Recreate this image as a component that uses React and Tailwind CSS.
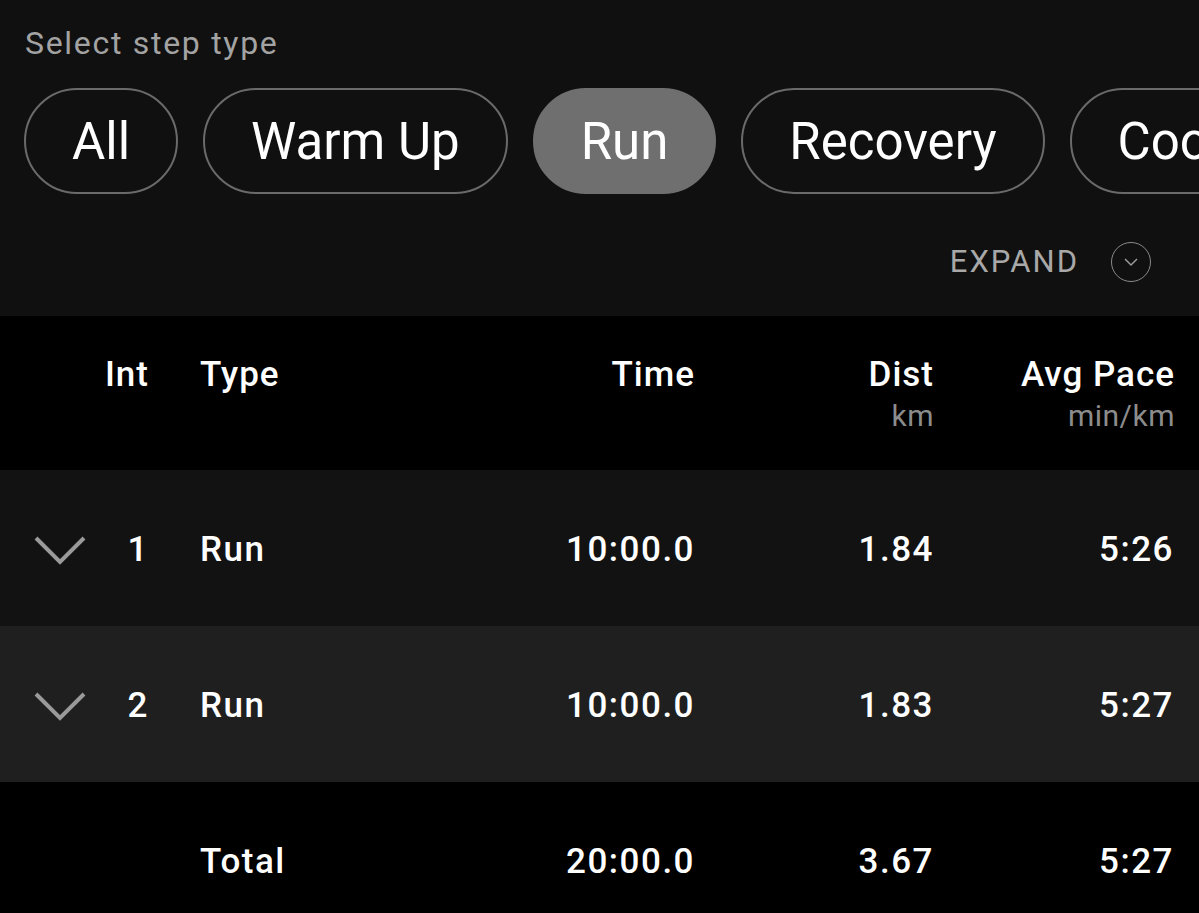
import { useState } from 'react';

const STEPS = ['All', 'Warm Up', 'Run', 'Recovery', 'Cool Down'];

const ROWS = [
  { int: '1', type: 'Run', time: '10:00.0', dist: '1.84', pace: '5:26', bg: 'bg-[#121212]' },
  { int: '2', type: 'Run', time: '10:00.0', dist: '1.83', pace: '5:27', bg: 'bg-[#1f1f1f]' },
];

function Chevron() {
  return (
    <svg width="52" height="30" viewBox="0 0 52 30" className="block">
      <polyline points="2,3 26,27 50,3" fill="none" stroke="#9a9a9a" strokeWidth="4" />
    </svg>
  );
}

function StepPill({ label, active, onClick }) {
  return (
    <button
      onClick={onClick}
      className={`shrink-0 h-[106px] px-[46px] rounded-full text-[51px] leading-none text-white ${
        active ? 'bg-[#6f6f6f] border-2 border-[#6f6f6f]' : 'border-2 border-[#6a6a6a]'
      }`}
    >
      {label}
    </button>
  );
}

function Row({ chevron, int, type, time, dist, pace, className }) {
  return (
    <div className={`flex items-center h-[156px] pt-[4px] text-[35px] font-medium tracking-[1.5px] text-white ${className}`}>
      <div className="w-[100px] pl-[34px]">{chevron && <Chevron />}</div>
      <div className="w-[49px] text-right">{int}</div>
      <div className="w-[200px] pl-[51px]">{type}</div>
      <div className="w-[346px] text-right">{time}</div>
      <div className="w-[239px] text-right">{dist}</div>
      <div className="w-[240px] text-right">{pace}</div>
    </div>
  );
}

export default function App() {
  const [step, setStep] = useState('Run');
  return (
    <div className="w-[1199px] h-[913px] overflow-hidden bg-black font-['Roboto',sans-serif]">
      <div className="h-[316px] bg-[#101010] pt-[24px]">
        <div className="pl-[25px] text-[32px] leading-[38px] text-[#a3a3a3] tracking-[1.7px]">Select step type</div>
        <div className="flex gap-[25px] pl-[24px] mt-[26px] overflow-hidden">
          {STEPS.map((s) => (
            <StepPill key={s} label={s} active={s === step} onClick={() => setStep(s)} />
          ))}
        </div>
        <div className="flex items-center justify-end pr-[48px] mt-[45px] gap-[32px]">
          <span className="text-[31px] tracking-[2px] text-[#a8a8a8]">EXPAND</span>
          <span className="w-[40px] h-[40px] rounded-full border-[1.5px] border-[#8a8a8a] flex items-center justify-center">
            <svg width="16" height="10" viewBox="0 0 16 10">
              <polyline points="2,2 8,8 14,2" fill="none" stroke="#9a9a9a" strokeWidth="1.5" />
            </svg>
          </span>
        </div>
      </div>

      <div className="flex items-start h-[154px] pt-[39px] bg-black text-[35px] leading-[40px] tracking-[1px] text-white font-medium">
        <div className="w-[100px]" />
        <div className="w-[49px] text-right">Int</div>
        <div className="w-[200px] pl-[51px]">Type</div>
        <div className="w-[346px] text-right">Time</div>
        <div className="w-[239px] text-right">
          Dist
          <div className="text-[30px] font-normal text-[#8c8c8c] leading-[42px] tracking-[0.5px]">km</div>
        </div>
        <div className="w-[241px] text-right">
          Avg Pace
          <div className="text-[30px] font-normal text-[#8c8c8c] leading-[42px] tracking-[0.5px]">min/km</div>
        </div>
      </div>

      {ROWS.map((r) => (
        <Row key={r.int} chevron {...r} className={r.bg} />
      ))}

      <Row type="Total" time="20:00.0" dist="3.67" pace="5:27" className="bg-black" />
    </div>
  );
}
